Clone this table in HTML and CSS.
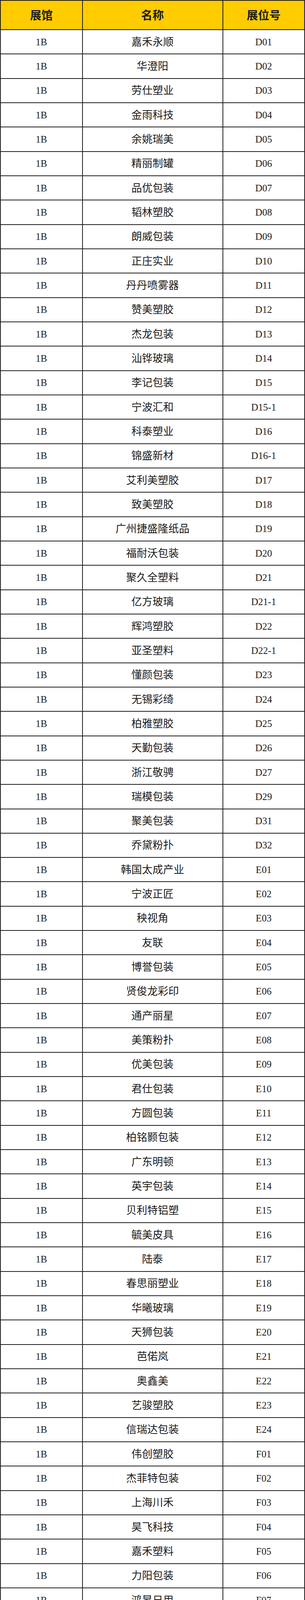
FILE: index.html
```html
<!DOCTYPE html>
<html lang="zh-CN">
<head>
<meta charset="utf-8">
<title>展位表</title>
<link rel="stylesheet" href="styles.css">
</head>
<body>
<div class="sheet">
<div class="cell head">展馆</div><div class="cell head">名称</div><div class="cell head">展位号</div>
<div class="cell">1B</div><div class="cell name">嘉禾永顺</div><div class="cell">D01</div>
<div class="cell">1B</div><div class="cell name">华澄阳</div><div class="cell">D02</div>
<div class="cell">1B</div><div class="cell name">劳仕塑业</div><div class="cell">D03</div>
<div class="cell">1B</div><div class="cell name">金雨科技</div><div class="cell">D04</div>
<div class="cell">1B</div><div class="cell name">余姚瑞美</div><div class="cell">D05</div>
<div class="cell">1B</div><div class="cell name">精丽制罐</div><div class="cell">D06</div>
<div class="cell">1B</div><div class="cell name">品优包装</div><div class="cell">D07</div>
<div class="cell">1B</div><div class="cell name">韬林塑胶</div><div class="cell">D08</div>
<div class="cell">1B</div><div class="cell name">朗威包装</div><div class="cell">D09</div>
<div class="cell">1B</div><div class="cell name">正庄实业</div><div class="cell">D10</div>
<div class="cell">1B</div><div class="cell name">丹丹喷雾器</div><div class="cell">D11</div>
<div class="cell">1B</div><div class="cell name">赞美塑胶</div><div class="cell">D12</div>
<div class="cell">1B</div><div class="cell name">杰龙包装</div><div class="cell">D13</div>
<div class="cell">1B</div><div class="cell name">汕铧玻璃</div><div class="cell">D14</div>
<div class="cell">1B</div><div class="cell name">李记包装</div><div class="cell">D15</div>
<div class="cell">1B</div><div class="cell name">宁波汇和</div><div class="cell">D15-1</div>
<div class="cell">1B</div><div class="cell name">科泰塑业</div><div class="cell">D16</div>
<div class="cell">1B</div><div class="cell name">锦盛新材</div><div class="cell">D16-1</div>
<div class="cell">1B</div><div class="cell name">艾利美塑胶</div><div class="cell">D17</div>
<div class="cell">1B</div><div class="cell name">致美塑胶</div><div class="cell">D18</div>
<div class="cell">1B</div><div class="cell name">广州捷盛隆纸品</div><div class="cell">D19</div>
<div class="cell">1B</div><div class="cell name">福耐沃包装</div><div class="cell">D20</div>
<div class="cell">1B</div><div class="cell name">聚久全塑料</div><div class="cell">D21</div>
<div class="cell">1B</div><div class="cell name">亿方玻璃</div><div class="cell">D21-1</div>
<div class="cell">1B</div><div class="cell name">辉鸿塑胶</div><div class="cell">D22</div>
<div class="cell">1B</div><div class="cell name">亚圣塑料</div><div class="cell">D22-1</div>
<div class="cell">1B</div><div class="cell name">懂颜包装</div><div class="cell">D23</div>
<div class="cell">1B</div><div class="cell name">无锡彩绮</div><div class="cell">D24</div>
<div class="cell">1B</div><div class="cell name">柏雅塑胶</div><div class="cell">D25</div>
<div class="cell">1B</div><div class="cell name">天勤包装</div><div class="cell">D26</div>
<div class="cell">1B</div><div class="cell name">浙江敬骋</div><div class="cell">D27</div>
<div class="cell">1B</div><div class="cell name">瑞模包装</div><div class="cell">D29</div>
<div class="cell">1B</div><div class="cell name">聚美包装</div><div class="cell">D31</div>
<div class="cell">1B</div><div class="cell name">乔黛粉扑</div><div class="cell">D32</div>
<div class="cell">1B</div><div class="cell name">韩国太成产业</div><div class="cell">E01</div>
<div class="cell">1B</div><div class="cell name">宁波正匠</div><div class="cell">E02</div>
<div class="cell">1B</div><div class="cell name">秧视角</div><div class="cell">E03</div>
<div class="cell">1B</div><div class="cell name">友联</div><div class="cell">E04</div>
<div class="cell">1B</div><div class="cell name">博誉包装</div><div class="cell">E05</div>
<div class="cell">1B</div><div class="cell name">贤俊龙彩印</div><div class="cell">E06</div>
<div class="cell">1B</div><div class="cell name">通产丽星</div><div class="cell">E07</div>
<div class="cell">1B</div><div class="cell name">美策粉扑</div><div class="cell">E08</div>
<div class="cell">1B</div><div class="cell name">优美包装</div><div class="cell">E09</div>
<div class="cell">1B</div><div class="cell name">君仕包装</div><div class="cell">E10</div>
<div class="cell">1B</div><div class="cell name">方圆包装</div><div class="cell">E11</div>
<div class="cell">1B</div><div class="cell name">柏铭颢包装</div><div class="cell">E12</div>
<div class="cell">1B</div><div class="cell name">广东明顿</div><div class="cell">E13</div>
<div class="cell">1B</div><div class="cell name">英宇包装</div><div class="cell">E14</div>
<div class="cell">1B</div><div class="cell name">贝利特铝塑</div><div class="cell">E15</div>
<div class="cell">1B</div><div class="cell name">毓美皮具</div><div class="cell">E16</div>
<div class="cell">1B</div><div class="cell name">陆泰</div><div class="cell">E17</div>
<div class="cell">1B</div><div class="cell name">春思丽塑业</div><div class="cell">E18</div>
<div class="cell">1B</div><div class="cell name">华曦玻璃</div><div class="cell">E19</div>
<div class="cell">1B</div><div class="cell name">天狮包装</div><div class="cell">E20</div>
<div class="cell">1B</div><div class="cell name">芭偌岚</div><div class="cell">E21</div>
<div class="cell">1B</div><div class="cell name">奥鑫美</div><div class="cell">E22</div>
<div class="cell">1B</div><div class="cell name">艺骏塑胶</div><div class="cell">E23</div>
<div class="cell">1B</div><div class="cell name">信瑞达包装</div><div class="cell">E24</div>
<div class="cell">1B</div><div class="cell name">伟创塑胶</div><div class="cell">F01</div>
<div class="cell">1B</div><div class="cell name">杰菲特包装</div><div class="cell">F02</div>
<div class="cell">1B</div><div class="cell name">上海川禾</div><div class="cell">F03</div>
<div class="cell">1B</div><div class="cell name">昊飞科技</div><div class="cell">F04</div>
<div class="cell">1B</div><div class="cell name">嘉禾塑料</div><div class="cell">F05</div>
<div class="cell">1B</div><div class="cell name">力阳包装</div><div class="cell">F06</div>
<div class="cell">1B</div><div class="cell name">鸿昇日用</div><div class="cell">F07</div>
<div class="cell">1B</div><div class="cell name">承泽塑料</div><div class="cell">F08</div>
<div class="cell">1B</div><div class="cell name">三荣日化</div><div class="cell">F09</div>
<div class="cell">1B</div><div class="cell name">博威包装</div><div class="cell">F10</div>
<div class="cell">1B</div><div class="cell name">亿和包装</div><div class="cell">F11</div>
<div class="cell">1B</div><div class="cell name">天盛塑业</div><div class="cell">F12</div>
<div class="cell">1B</div><div class="cell name">金之铖</div><div class="cell">F13</div>
<div class="cell">1B</div><div class="cell name">苏奈思包装</div><div class="cell">F14</div>
<div class="cell">1B</div><div class="cell name">凡德包装</div><div class="cell">F15</div>
<div class="cell">1B</div><div class="cell name">易初塑料</div><div class="cell">F16</div>
<div class="cell">1B</div><div class="cell name">华昱塑业</div><div class="cell">F17</div>
<div class="cell">1B</div><div class="cell name">兴业塑胶</div><div class="cell">F18</div>
<div class="cell">1B</div><div class="cell name">丹之鸿塑胶</div><div class="cell">F19</div>
<div class="cell">1B</div><div class="cell name">博克斯包装</div><div class="cell">F20</div>
<div class="cell">1B</div><div class="cell name">新乐心包装</div><div class="cell">F21</div>
<div class="cell">1B</div><div class="cell name">巧能塑业</div><div class="cell">F23</div>
<div class="cell">1B</div><div class="cell name">亚华印刷</div><div class="cell">F24</div>
<div class="cell">1B</div><div class="cell name">三乐塑业</div><div class="cell">F25</div>
<div class="cell">1B</div><div class="cell name">楷烽包装</div><div class="cell">F27</div>
<div class="cell">1B</div><div class="cell name">博雅塑胶</div><div class="cell">F29</div>
</div>
</body>
</html>
```

FILE: styles.css
```css
html, body {
  margin: 0;
  padding: 0;
  background: #ffffff;
}

.sheet {
  box-sizing: border-box;
  width: 780px;
  display: grid;
  grid-template-columns: 209.5px 359px 209.5px;
  grid-template-rows: 75px;
  grid-auto-rows: 62.33px;
  border-top: 2px solid #1e1e1e;
  border-left: 2px solid #1e1e1e;
  font-family: "Liberation Serif", "Noto Sans CJK SC", serif;
  color: #1c1c1c;
}

.cell {
  box-sizing: border-box;
  display: flex;
  align-items: center;
  justify-content: center;
  border-right: 2px solid #1e1e1e;
  border-bottom: 2px solid #1e1e1e;
  font-size: 25px;
  line-height: 1;
  white-space: nowrap;
  overflow: hidden;
}

.name {
  font-size: 27px;
  padding-top: 2px;
}

.head {
  background: #ffcc00;
  font-size: 29px;
  font-weight: 700;
  padding-top: 3px;
}
```
